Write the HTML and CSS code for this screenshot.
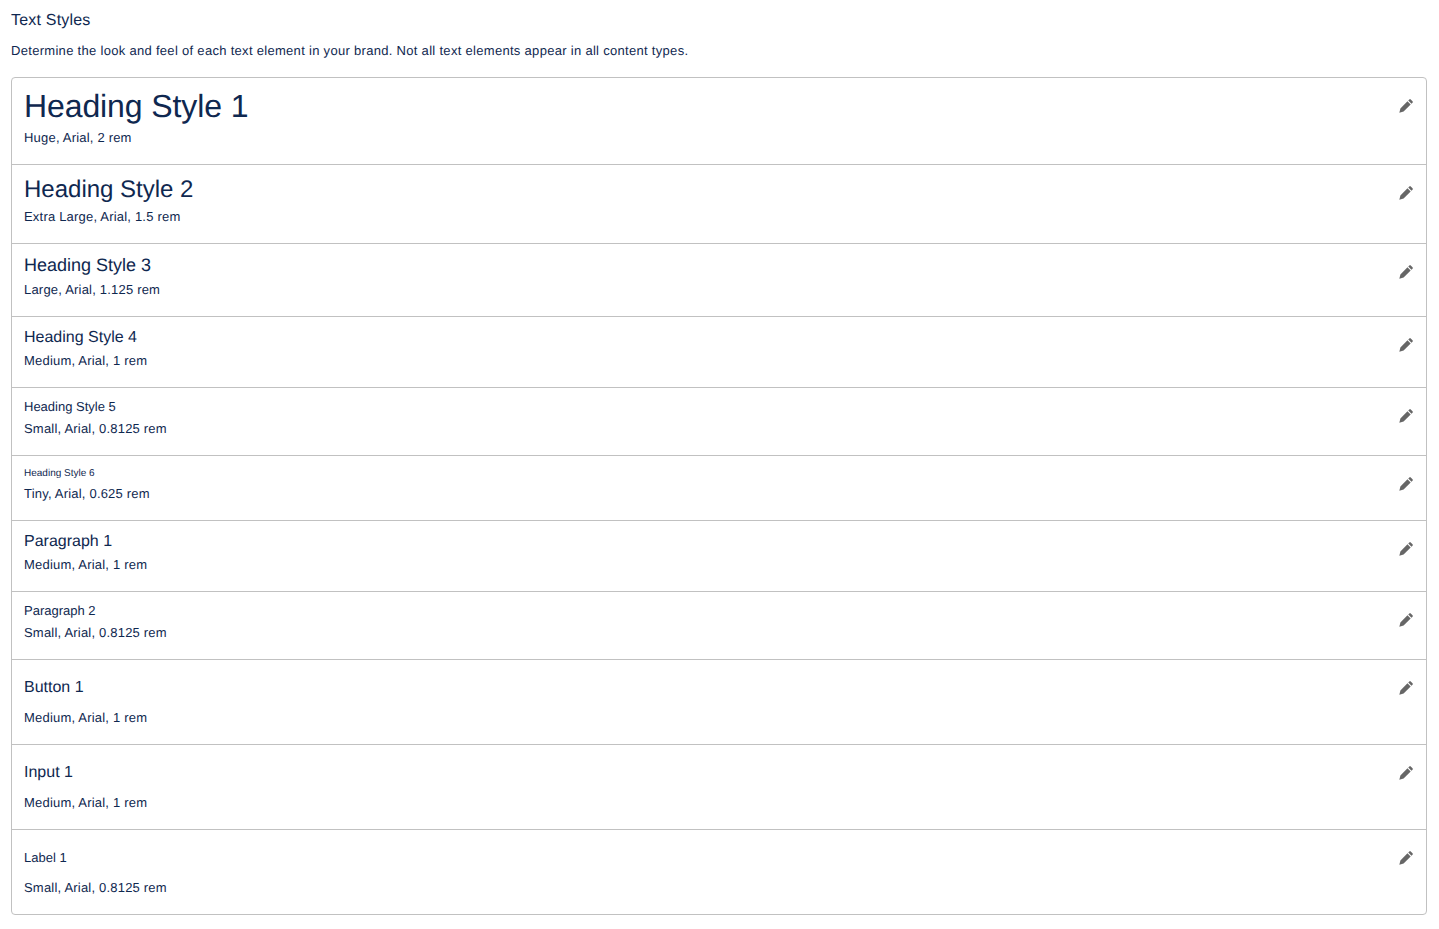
FILE: index.html
```html
<!DOCTYPE html>
<html lang="en">
<head>
  <meta charset="UTF-8">
  <title>Text Styles</title>
  <link rel="stylesheet" href="styles.css">
</head>
<body>
  <svg class="sprite" aria-hidden="true">
    <symbol id="pencil" viewBox="0 0 24 24">
      <path d="M2 22L3.6 15.6 14.2 5 19 9.8 8.4 20.4zM15.4 3.8L17 2.2a1.5 1.5 0 0 1 2.1 0L21.8 4.9a1.5 1.5 0 0 1 0 2.1L20.2 8.6z"/>
    </symbol>
  </svg>
  <main>
    <h2 class="title">Text Styles</h2>
    <p class="intro">Determine the look and feel of each text element in your brand. Not all text elements appear in all content types.</p>
    <ul class="styles">
      <li class="row">
        <div class="info">
          <div class="sample h1">Heading Style 1</div>
          <div class="meta">Huge, Arial, 2 rem</div>
        </div>
        <button class="edit"><svg><use href="#pencil"/></svg></button>
      </li>
      <li class="row">
        <div class="info">
          <div class="sample h2">Heading Style 2</div>
          <div class="meta">Extra Large, Arial, 1.5 rem</div>
        </div>
        <button class="edit"><svg><use href="#pencil"/></svg></button>
      </li>
      <li class="row">
        <div class="info">
          <div class="sample h3">Heading Style 3</div>
          <div class="meta">Large, Arial, 1.125 rem</div>
        </div>
        <button class="edit"><svg><use href="#pencil"/></svg></button>
      </li>
      <li class="row">
        <div class="info">
          <div class="sample h4">Heading Style 4</div>
          <div class="meta">Medium, Arial, 1 rem</div>
        </div>
        <button class="edit"><svg><use href="#pencil"/></svg></button>
      </li>
      <li class="row">
        <div class="info">
          <div class="sample h5">Heading Style 5</div>
          <div class="meta">Small, Arial, 0.8125 rem</div>
        </div>
        <button class="edit"><svg><use href="#pencil"/></svg></button>
      </li>
      <li class="row">
        <div class="info">
          <div class="sample h6">Heading Style 6</div>
          <div class="meta">Tiny, Arial, 0.625 rem</div>
        </div>
        <button class="edit"><svg><use href="#pencil"/></svg></button>
      </li>
      <li class="row">
        <div class="info">
          <div class="sample p1">Paragraph 1</div>
          <div class="meta">Medium, Arial, 1 rem</div>
        </div>
        <button class="edit"><svg><use href="#pencil"/></svg></button>
      </li>
      <li class="row">
        <div class="info">
          <div class="sample p2">Paragraph 2</div>
          <div class="meta">Small, Arial, 0.8125 rem</div>
        </div>
        <button class="edit"><svg><use href="#pencil"/></svg></button>
      </li>
      <li class="row">
        <div class="info">
          <div class="sample control">Button 1</div>
          <div class="meta">Medium, Arial, 1 rem</div>
        </div>
        <button class="edit"><svg><use href="#pencil"/></svg></button>
      </li>
      <li class="row">
        <div class="info">
          <div class="sample control">Input 1</div>
          <div class="meta">Medium, Arial, 1 rem</div>
        </div>
        <button class="edit"><svg><use href="#pencil"/></svg></button>
      </li>
      <li class="row">
        <div class="info">
          <div class="sample label">Label 1</div>
          <div class="meta">Small, Arial, 0.8125 rem</div>
        </div>
        <button class="edit"><svg><use href="#pencil"/></svg></button>
      </li>
    </ul>
  </main>
</body>
</html>
```

FILE: styles.css
```css
body {
  margin: 0;
  font-family: 'Liberation Sans', Arial, sans-serif;
  color: #0f2850;
  background-color: white;
  text-rendering: geometricPrecision;
}

.sprite {
  display: none;
}

main {
  padding: 12px 12px 14px 11px;
}

.title {
  margin: 0;
  font-size: 16px;
  font-weight: 400;
  line-height: 18px;
  letter-spacing: 0.2px;
}

.intro {
  margin: 11px 0 17px;
  font-size: 13px;
  line-height: 19px;
  letter-spacing: 0.3px;
}

.styles {
  margin: 0;
  padding: 0;
  list-style: none;
  border: 1px solid #c1c1c1;
  border-radius: 4px;
}

.row {
  display: flex;
  justify-content: space-between;
  align-items: flex-start;
  padding: 12px 4px 16px 12px;
  border-top: 1px solid #c1c1c1;
}

.row:first-child {
  border-top: none;
}

.sample {
  margin-bottom: 6px;
  line-height: 1;
}

.h1 { font-size: 32px; letter-spacing: -0.1px; }
.h2 { padding-top: 1px; margin-bottom: 5px; font-size: 24px; }
.h3 { font-size: 18px; }
.h4 { padding-top: 1px; margin-bottom: 5px; font-size: 16px; }
.h5 { font-size: 13px; }
.h6 { padding-top: 1px; margin-bottom: 5px; font-size: 10px; }
.p1 { padding-top: 1px; margin-bottom: 5px; font-size: 16px; }
.p2 { font-size: 13px; }

.control {
  padding: 8px 0 7px;
  margin-bottom: 5px;
  font-size: 16px;
}

.label {
  padding: 9px 0;
  margin-bottom: 5px;
  font-size: 13px;
}

.meta {
  font-size: 13px;
  line-height: 20px;
  letter-spacing: 0.2px;
}

.edit {
  display: flex;
  align-items: center;
  justify-content: center;
  width: 32px;
  height: 32px;
  padding: 0;
  border: none;
  background: none;
}

.edit svg {
  width: 16px;
  height: 16px;
  fill: #666;
}
```
